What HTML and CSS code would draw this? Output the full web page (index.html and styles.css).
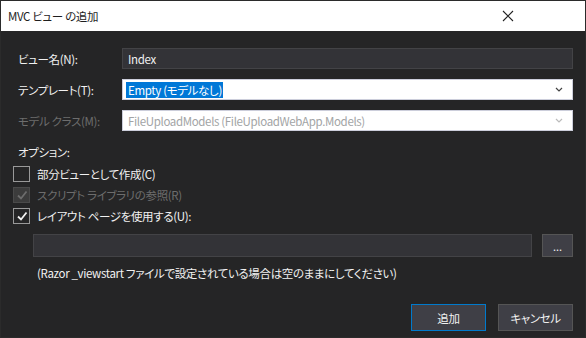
FILE: index.html
```html
<!DOCTYPE html>
<html lang="ja">
  <head>
    <meta charset="UTF-8" />
    <meta name="viewport" content="width=device-width, initial-scale=1.0" />
    <title>MVC ビュー の追加</title>
    <link rel="stylesheet" href="styles.css">
  </head>
  <body>
    <div class="dialog">
      <div class="title-bar">
        <span class="title">MVC ビュー の追加</span>
        <svg class="close" width="12" height="12" viewBox="0 0 12 12">
          <path d="M1 1 L11 11 M11 1 L1 11" stroke="#222" stroke-width="1.1" fill="none" />
        </svg>
      </div>

      <div class="body">
        <div class="form">
          <label class="label">ビュー名(N):</label>
          <div class="textbox">Index</div>

          <label class="label">テンプレート(T):</label>
          <div class="select">
            <span class="selected">Empty (モデルなし)</span>
            <svg class="chevron" width="8" height="5" viewBox="0 0 8 5">
              <path d="M1 1 L4 4 L7 1" stroke="#444" stroke-width="1.2" fill="none" />
            </svg>
          </div>

          <label class="label disabled">モデル クラス(M):</label>
          <div class="select is-disabled">
            <span>FileUploadModels (FileUploadWebApp.Models)</span>
            <svg class="chevron" width="8" height="5" viewBox="0 0 8 5">
              <path d="M1 1 L4 4 L7 1" stroke="#bbb" stroke-width="1.2" fill="none" />
            </svg>
          </div>
        </div>

        <div class="options-title">オプション:</div>

        <div class="checks">
          <div class="check-row">
            <span class="box"></span>
            <span>部分ビューとして作成(C)</span>
          </div>
          <div class="check-row disabled">
            <span class="box box-disabled">
              <svg width="12" height="12" viewBox="0 0 12 12">
                <path d="M2 6.5 L5 9.5 L10.5 2.5" stroke="#6d6d6d" stroke-width="1.8" fill="none" />
              </svg>
            </span>
            <span>スクリプト ライブラリの参照(R)</span>
          </div>
          <div class="check-row">
            <span class="box">
              <svg width="12" height="12" viewBox="0 0 12 12">
                <path d="M2 6.5 L5 9.5 L10.5 2.5" stroke="#f1f1f1" stroke-width="1.8" fill="none" />
              </svg>
            </span>
            <span>レイアウト ページを使用する(U):</span>
          </div>
        </div>

        <div class="path-row">
          <div class="path-input"></div>
          <button class="browse">...</button>
        </div>

        <div class="note">(Razor _viewstart ファイルで設定されている場合は空のままにしてください)</div>

        <div class="footer">
          <button class="btn btn-primary">追加</button>
          <button class="btn">キャンセル</button>
        </div>
      </div>
    </div>
  </body>
</html>
```

FILE: styles.css
```css
* {
  box-sizing: border-box;
  margin: 0;
  padding: 0;
}

body {
  font-family: "Noto Sans CJK JP", "Noto Sans", sans-serif;
  font-size: 11.5px;
  letter-spacing: -0.35px;
  font-feature-settings: "palt";
  background: #252526;
  color: #f1f1f1;
}

.dialog {
  width: 586px;
  height: 338px;
  border: 1px solid #2b2b2b;
  display: flex;
  flex-direction: column;
}

.title-bar {
  height: 30px;
  background: #ffffff;
  color: #1e1e1e;
  display: flex;
  align-items: center;
  justify-content: space-between;
  padding: 0 71px 0 7px;
}

.close {
  display: block;
}

.body {
  flex: 1;
  display: flex;
  flex-direction: column;
  padding: 17px 12px 6px 17px;
}

.form {
  display: grid;
  grid-template-columns: 104px 1fr;
  row-gap: 10px;
  align-items: center;
}

.label {
  line-height: 16px;
}

.label.disabled {
  color: #6d6d6d;
}

.textbox,
.select {
  height: 21px;
  display: flex;
  align-items: center;
  padding: 0 5px;
  line-height: 16px;
}

.textbox {
  background: #333337;
  border: 1px solid #434346;
}

.select {
  background: #ffffff;
  border: 1px solid #cccedb;
  color: #1e1e1e;
  justify-content: space-between;
  padding: 0 9px 0 3px;
}

.selected {
  background: #0078d7;
  color: #ffffff;
  padding: 0 1px 0 2px;
}

.select.is-disabled {
  color: #a2a4a5;
  padding-left: 5px;
}

.chevron {
  display: block;
}

.options-title {
  margin-top: 13px;
  line-height: 16px;
}

.checks {
  margin: 6px 0 0 -5px;
  display: flex;
  flex-direction: column;
  gap: 5px;
}

.check-row {
  display: flex;
  align-items: center;
  gap: 7px;
  line-height: 16px;
}

.check-row.disabled {
  color: #6d6d6d;
}

.box {
  width: 17px;
  height: 16px;
  border: 1px solid #999999;
  display: flex;
  align-items: center;
  justify-content: center;
}

.box-disabled {
  background: #3c3c3c;
  border-color: #4a4a4a;
}

.path-row {
  margin: 10px 0 0 15px;
  display: flex;
  gap: 10px;
}

.path-input {
  flex: 1;
  height: 23px;
  background: #333337;
  border: 1px solid #434346;
}

.browse {
  width: 31px;
  height: 23px;
  background: #3f3f46;
  border: 1px solid #555555;
  color: #f1f1f1;
  font-family: inherit;
  font-size: 11px;
  line-height: 14px;
}

.note {
  margin: 8px 0 0 19px;
  line-height: 16px;
}

.footer {
  margin-top: auto;
  display: flex;
  justify-content: flex-end;
  gap: 12px;
}

.btn {
  width: 75px;
  height: 27px;
  background: #3f3f46;
  border: 1px solid #555555;
  color: #f1f1f1;
  font-family: inherit;
  font-size: 11.5px;
  letter-spacing: -0.35px;
  font-feature-settings: "palt";
}

.btn-primary {
  border-color: #007acc;
}
```
